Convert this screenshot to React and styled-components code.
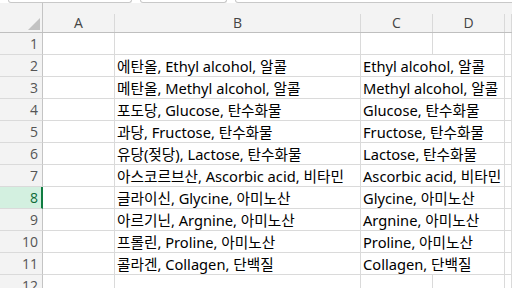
import React from "react";
import styled, { createGlobalStyle } from "styled-components";

const Global = createGlobalStyle`
  html, body { margin: 0; padding: 0; background: #ffffff; overflow: hidden; }
  * { box-sizing: border-box; }
`;

const COLS = "43px 72px 246px 72px 72px 1fr";

const Sheet = styled.div`
  width: 512px;
  height: 288px;
  overflow: hidden;
  display: flex;
  flex-direction: column;
  background: #ffffff;
`;

const TopStrip = styled.div`
  height: 3px;
  display: flex;
  gap: 8px;
  padding-left: 8px;
  margin-right: -20px;
  background: #ffffff;
`;

const FieldEdge = styled.div`
  height: 3px;
  width: ${(p) => (p.$w ? `${p.$w}px` : "auto")};
  flex: ${(p) => (p.$w ? "none" : "1")};
  border: 1px solid #c8c8c8;
  border-top: none;
  border-radius: 0 0 4px 4px;
  background: #ffffff;
`;

const HeaderRow = styled.div`
  display: grid;
  grid-template-columns: ${COLS};
  height: 34px;
  background: #f3f3f3;
  border-bottom: 1px solid #bfbfbf;
`;

const Corner = styled.div`
  align-self: end;
  height: 29px;
  border-right: 1px solid #c4c4c4;
  display: flex;
  justify-content: flex-end;
  align-items: flex-end;
  padding: 0 2px 2px 0;
`;

const Triangle = styled.div`
  width: 12px;
  height: 12px;
  background: #c2c2c2;
  clip-path: polygon(100% 0, 100% 100%, 0 100%);
`;

const ColHead = styled.div`
  align-self: end;
  height: 18px;
  border-right: 1px solid #d9d9d9;
  text-align: center;
  font-family: "Open Sans", "Noto Sans", sans-serif;
  font-size: 14px;
  line-height: 18px;
  color: #444444;
`;

const Row = styled.div`
  display: grid;
  grid-template-columns: ${COLS};
  height: 22px;
  flex: none;
`;

const RowHead = styled.div`
  background: ${(p) => (p.$sel ? "#d3f0e0" : "#f3f3f3")};
  border-right: ${(p) => (p.$sel ? "2px solid #107c41" : "1px solid #c4c4c4")};
  border-bottom: 1px solid #dadada;
  color: ${(p) => (p.$sel ? "#0e6b38" : "#555555")};
  text-align: right;
  padding-right: ${(p) => (p.$sel ? "3px" : "4px")};
  font-family: "Open Sans", "Noto Sans", sans-serif;
  font-size: 14px;
  line-height: 21px;
`;

const Cell = styled.div`
  grid-column: span ${(p) => p.$span || 1};
  border-right: 1px solid #dadada;
  border-bottom: 1px solid #dadada;
  padding: 1px 0 0 2px;
  white-space: nowrap;
  overflow: hidden;
  font-family: "Noto Sans", "Noto Sans CJK KR", sans-serif;
  font-size: 14.67px;
  line-height: 21px;
  color: #000000;
`;

const data = [
  ["에탄올, Ethyl alcohol, 알콜", "Ethyl alcohol, 알콜"],
  ["메탄올, Methyl alcohol, 알콜", "Methyl alcohol, 알콜"],
  ["포도당, Glucose, 탄수화물", "Glucose, 탄수화물"],
  ["과당, Fructose, 탄수화물", "Fructose, 탄수화물"],
  ["유당(젖당), Lactose, 탄수화물", "Lactose, 탄수화물"],
  ["아스코르브산, Ascorbic acid, 비타민", "Ascorbic acid, 비타민"],
  ["글라이신, Glycine, 아미노산", "Glycine, 아미노산"],
  ["아르기닌, Argnine, 아미노산", "Argnine, 아미노산"],
  ["프롤린, Proline, 아미노산", "Proline, 아미노산"],
  ["콜라겐, Collagen, 단백질", "Collagen, 단백질"],
];

function EmptyRow({ n }) {
  return (
    <Row>
      <RowHead>{n}</RowHead>
      <Cell />
      <Cell />
      <Cell />
      <Cell />
      <Cell />
    </Row>
  );
}

export default function App() {
  return (
    <>
      <Global />
      <Sheet>
        <TopStrip>
          <FieldEdge $w={124} />
          <FieldEdge $w={87} />
          <FieldEdge />
        </TopStrip>
        <HeaderRow>
          <Corner>
            <Triangle />
          </Corner>
          <ColHead>A</ColHead>
          <ColHead>B</ColHead>
          <ColHead>C</ColHead>
          <ColHead>D</ColHead>
          <ColHead />
        </HeaderRow>
        <EmptyRow n={1} />
        {data.map(([b, c], i) => (
          <Row key={i}>
            <RowHead $sel={i + 2 === 8}>{i + 2}</RowHead>
            <Cell />
            <Cell>{b}</Cell>
            <Cell $span={2}>{c}</Cell>
            <Cell />
          </Row>
        ))}
        <EmptyRow n={12} />
      </Sheet>
    </>
  );
}
